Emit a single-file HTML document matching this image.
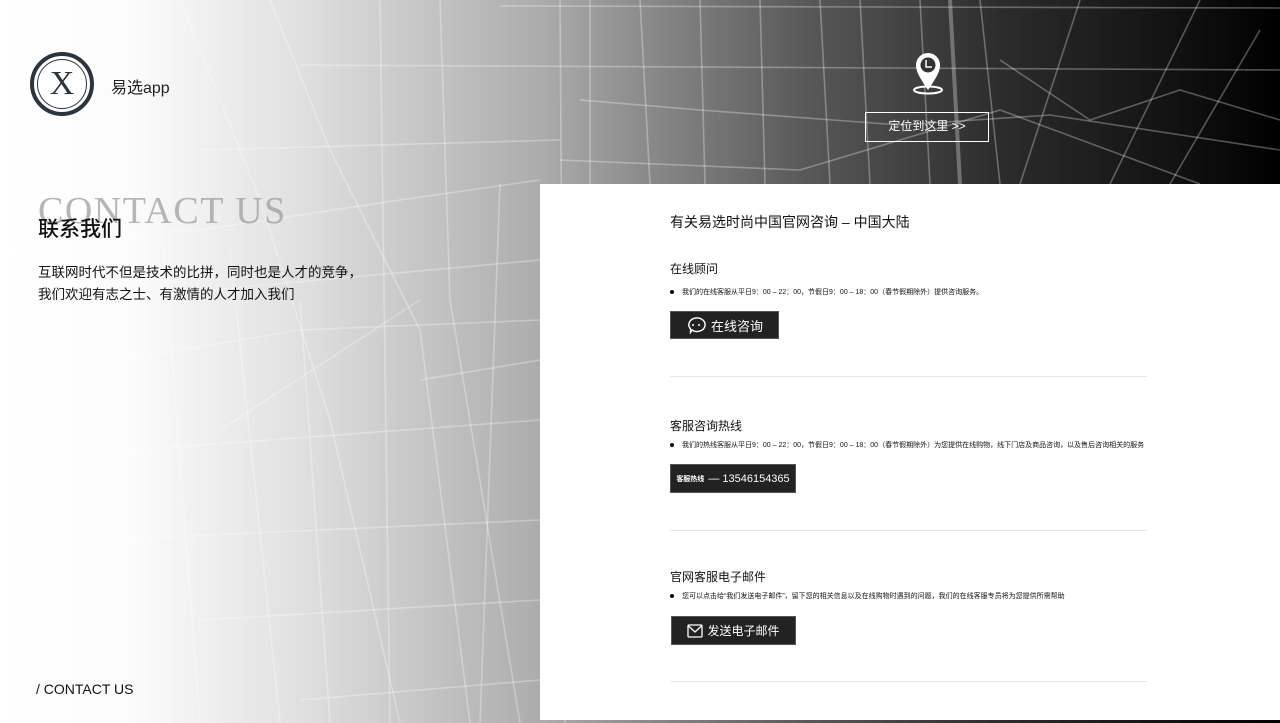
<!DOCTYPE html>
<html><head><meta charset="utf-8"><style>
*{margin:0;padding:0;box-sizing:border-box}
body{width:1280px;height:723px;overflow:hidden;position:relative;font-family:"Liberation Sans","Noto Sans CJK SC",sans-serif;background:#fff}
#bg{position:absolute;left:0;top:0;width:1280px;height:723px;background:linear-gradient(90deg,#fff 0px,#fcfcfc 130px,#e0e0e0 300px,#acacac 540px,#5a5a5a 800px,#2c2c2c 1000px,#111 1180px,#000 1280px)}
svg.map{position:absolute;left:0;top:0}
.logo{position:absolute;left:30px;top:52px;width:64px;height:64px;border-radius:50%;border:4px solid #2b3540;background:#fff}
.logo:after{content:"";position:absolute;left:3px;top:3px;right:3px;bottom:3px;border:1px solid #2b3540;border-radius:50%}
.logo span{position:absolute;left:0;right:0;top:9px;text-align:center;font-family:"Liberation Serif",serif;font-size:34px;color:#2b3540}
.t{position:absolute;white-space:nowrap}
.panel{position:absolute;left:540px;top:184px;width:740px;height:536px;background:#fff}
.btn{position:absolute;background:#222;color:#fff;border:1px solid #555;display:flex;align-items:center;justify-content:center}
.hr{position:absolute;left:670px;width:477px;height:1px;background:#e6e6e6}
.dot{display:inline-block;width:4px;height:4px;border-radius:50%;background:#111;margin-right:8px;vertical-align:middle}
</style></head><body>
<div id="bg"></div>
<svg class="map" width="1280" height="723" fill="none" stroke="#fff" stroke-opacity="0.3" stroke-width="1.6">
<path d="M180 0 L260 200 L330 420 L400 723"/>
<path d="M270 0 L330 150 L420 330 L470 723"/>
<path d="M380 0 L390 723"/>
<path d="M440 0 L450 300 L520 723"/>
<path d="M560 0 L565 723"/>
<path d="M590 0 L590 184"/>
<path d="M640 0 L650 184"/>
<path d="M700 0 L705 184"/>
<path d="M760 0 L765 184"/>
<path d="M820 0 L830 184"/>
<path d="M860 0 L870 184"/>
<path d="M920 0 L930 184"/>
<path d="M980 0 L1000 184"/>
<path d="M1080 0 L1020 184"/>
<path d="M1200 0 L1110 184"/>
<path d="M1260 30 L1170 184"/>
<path d="M500 6 L1280 8"/>
<path d="M300 65 L1280 70"/>
<path d="M200 150 L560 140"/>
<path d="M580 100 L700 110 L900 125 L1050 115 L1280 150"/>
<path d="M560 160 L800 170 L1000 110 L1200 184"/>
<path d="M0 240 L200 230 L400 200 L540 180"/>
<path d="M100 300 L540 260"/>
<path d="M0 380 L300 330 L540 320"/>
<path d="M0 460 L540 420"/>
<path d="M100 540 L540 520"/>
<path d="M200 620 L540 600"/>
<path d="M300 700 L540 680"/>
<path d="M160 200 L200 723"/>
<path d="M230 250 L280 723"/>
<path d="M300 300 L330 723"/>
<path d="M500 184 L480 723"/>
<path d="M420 380 L540 360"/>
<path d="M220 430 L420 300"/>
<path d="M950 0 L960 184" stroke-width="4"/>
<path d="M1000 60 L1090 120 L1180 90 L1280 120"/>
</svg>
<div class="logo"><span>X</span></div>
<div class="t" style="left:111px;top:74px;font-size:16px;color:#222">易选app</div>
<div class="t" style="left:38px;top:189px;font-family:'Liberation Serif',serif;font-size:38px;color:#999;opacity:.7;letter-spacing:1.5px">CONTACT US</div>
<div class="t" style="left:38px;top:213px;font-size:21px;color:#111;font-weight:500">联系我们</div>
<div class="t" style="left:38px;top:262px;font-size:13.5px;line-height:22px;color:#111">互联网时代不但是技术的比拼，同时也是人才的竞争，<br>我们欢迎有志之士、有激情的人才加入我们</div>
<div class="t" style="left:36px;top:681px;font-size:14px;color:#111">/ CONTACT US</div>

<svg style="position:absolute;left:906px;top:50px" width="46" height="46" fill="none">
<path d="M22 40 C14 28 10 22 10 15 A12 12 0 0 1 34 15 C34 22 30 28 22 40Z" fill="#fff"/>
<circle cx="22" cy="15" r="7.5" fill="#333"/>
<path d="M20 10 V17 H26" stroke="#fff" stroke-width="1.5"/>
<ellipse cx="22" cy="40" rx="14" ry="3.5" stroke="#fff" stroke-width="2"/>
</svg>
<div class="t" style="left:865px;top:112px;width:124px;height:30px;border:1.5px solid #fff;color:#fff;font-size:12px;text-align:center;line-height:27px">定位到这里 &gt;&gt;</div>

<div class="panel"></div>
<div class="t" style="left:670px;top:212px;font-size:14px;color:#111">有关易选时尚中国官网咨询 – 中国大陆</div>
<div class="t" style="left:670px;top:260px;font-size:12px;color:#111">在线顾问</div>
<div class="t" style="left:670px;top:287px;font-size:7px;color:#111"><span class="dot"></span>我们的在线客服从平日9：00 – 22：00，节假日9：00 – 18：00（春节假期除外）提供咨询服务。</div>
<div class="btn" style="left:670px;top:311px;width:109px;height:28px;font-size:13px">
<svg width="20" height="18" viewBox="0 0 20 18" style="margin-right:5px" fill="none" stroke="#fff" stroke-width="1.4"><path d="M10 2 A8 6.8 0 1 1 6 14 L4.5 16.5 L4.6 13 A8 6.8 0 0 1 10 2Z"/><circle cx="7" cy="9" r="1" fill="#fff" stroke="none"/><circle cx="13" cy="9" r="1" fill="#fff" stroke="none"/></svg>在线咨询</div>
<div class="hr" style="top:376px"></div>
<div class="t" style="left:670px;top:417px;font-size:12px;color:#111">客服咨询热线</div>
<div class="t" style="left:670px;top:440px;font-size:7px;color:#111"><span class="dot"></span>我们的热线客服从平日9：00 – 22：00，节假日9：00 – 18：00（春节假期除外）为您提供在线购物，线下门店及商品咨询，以及售后咨询相关的服务</div>
<div class="btn" style="left:670px;top:464px;width:126px;height:29px;font-size:11px"><span style="font-size:7px;font-weight:bold;margin-right:4px">客服热线</span>— 13546154365</div>
<div class="hr" style="top:530px"></div>
<div class="t" style="left:670px;top:568px;font-size:12px;color:#111">官网客服电子邮件</div>
<div class="t" style="left:670px;top:591px;font-size:7px;color:#111"><span class="dot"></span>您可以点击给“我们发送电子邮件”，留下您的相关信息以及在线购物时遇到的问题，我们的在线客服专员将为您提供所需帮助</div>
<div class="btn" style="left:671px;top:616px;width:125px;height:29px;font-size:12px">
<svg width="16" height="14" viewBox="0 0 16 14" style="margin-right:4px" fill="none" stroke="#fff" stroke-width="1.3"><rect x="1" y="1" width="14" height="12" rx="1"/><path d="M1.5 2 L8 8 L14.5 2"/></svg>发送电子邮件</div>
<div class="hr" style="top:681px"></div>
</body></html>
